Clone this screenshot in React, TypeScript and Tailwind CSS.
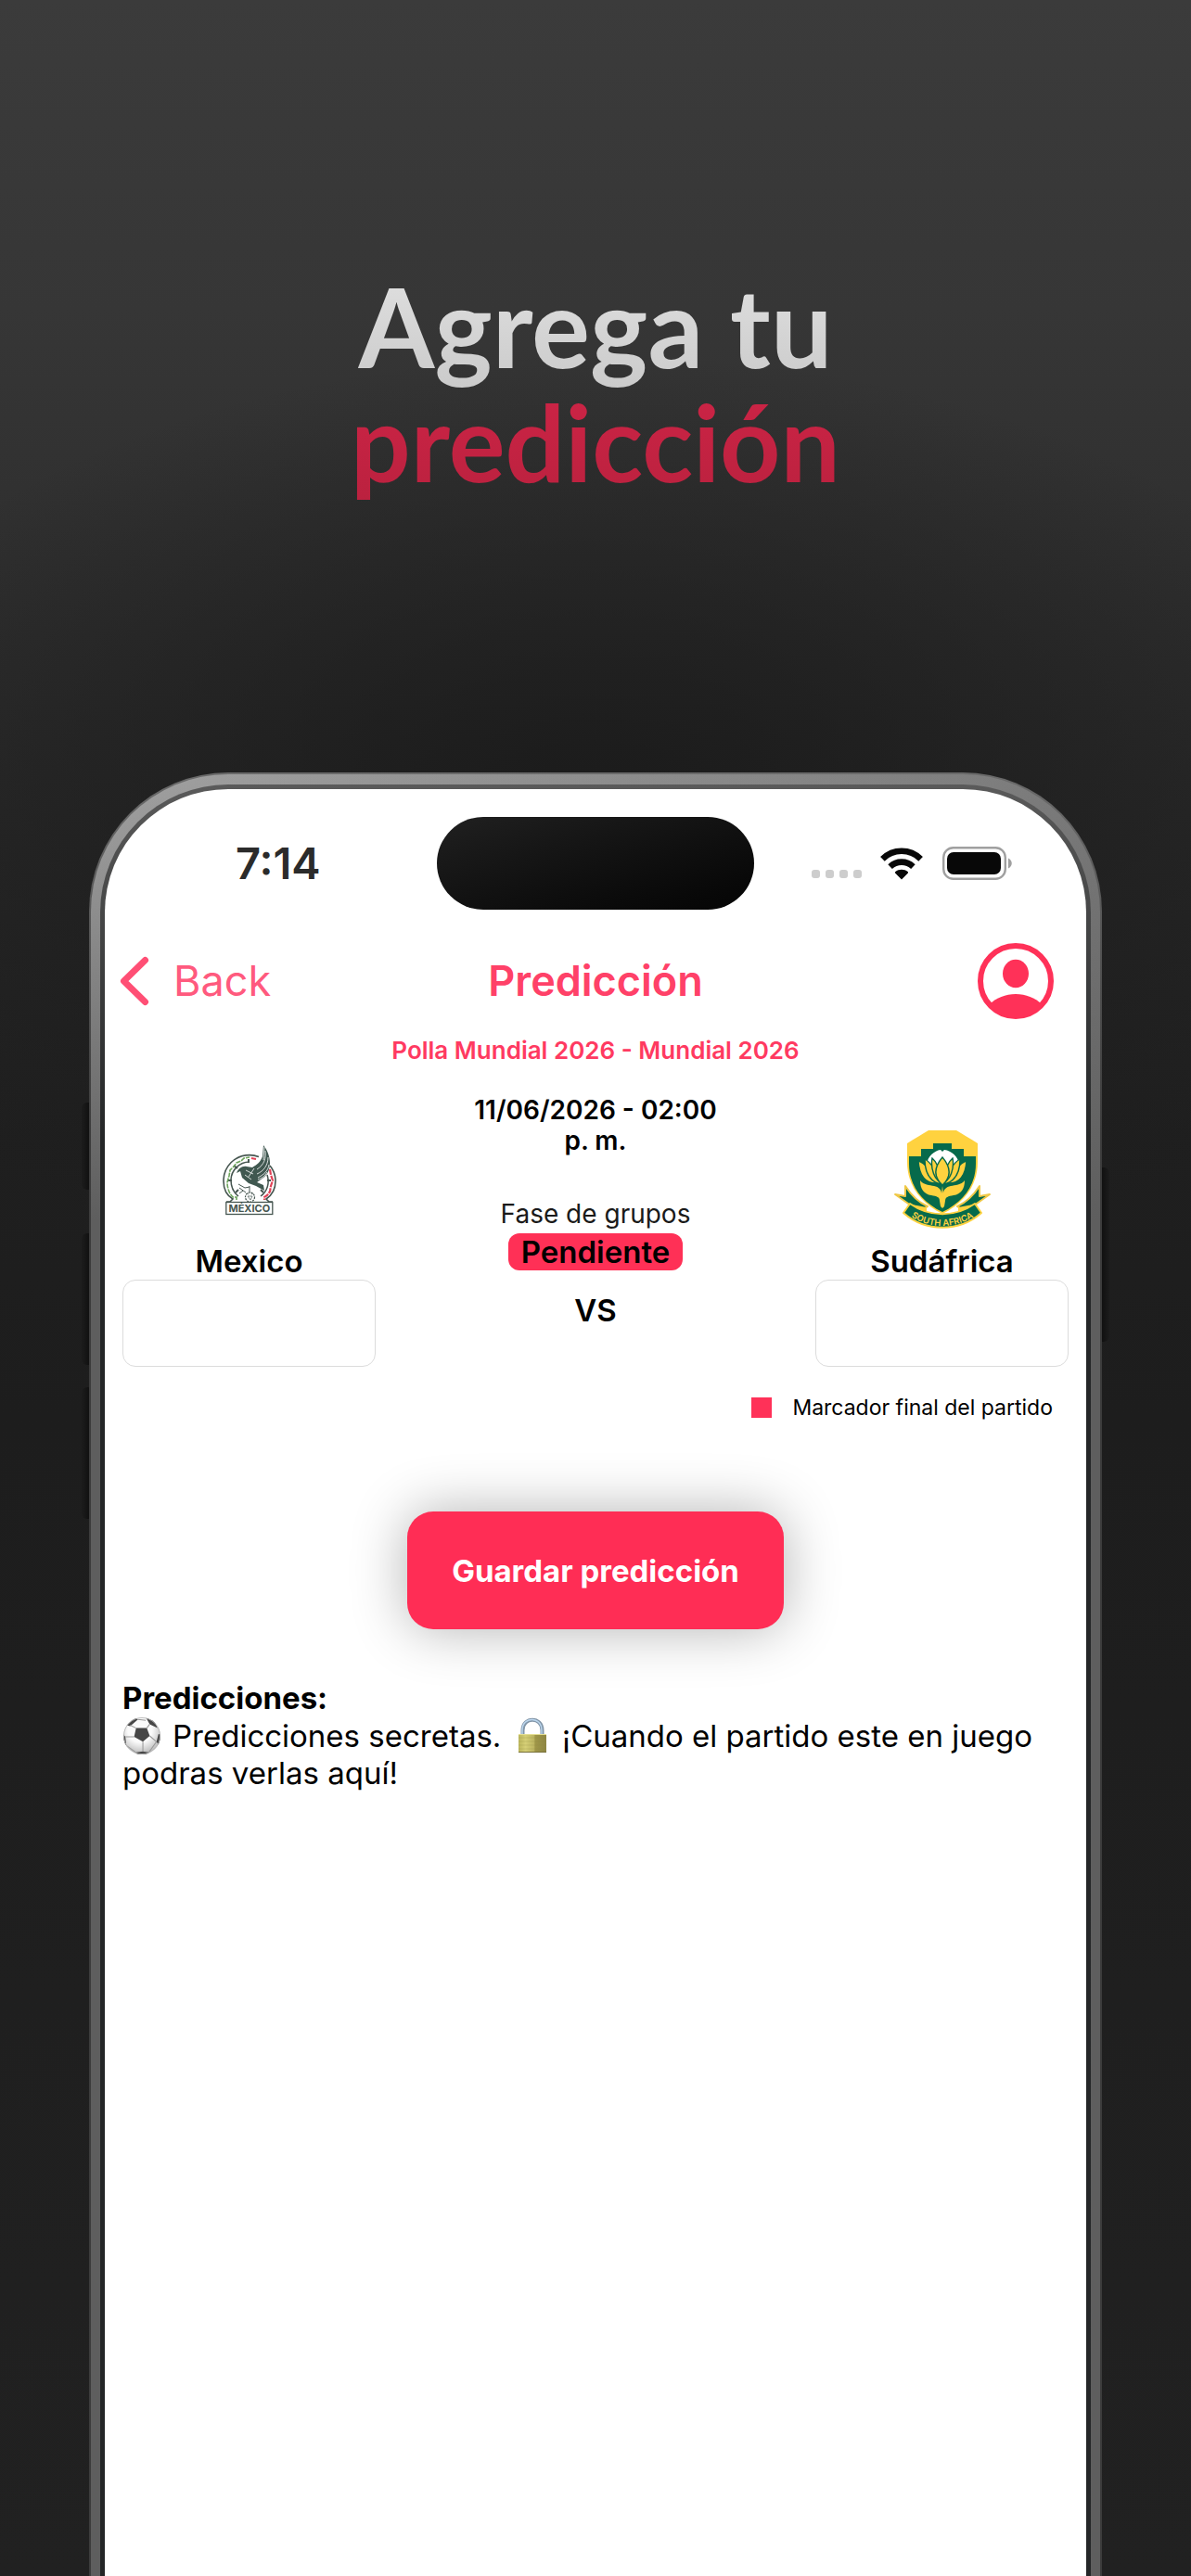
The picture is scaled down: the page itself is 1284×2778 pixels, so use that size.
import { useState } from "react";

function ChevronLeft() {
  return (
    <svg viewBox="0 0 32 54" className="h-[54px] w-8" fill="none" aria-hidden="true">
      <path
        d="M27.5 4.5 4.5 27l23 22.5"
        stroke="#ff4f75"
        strokeWidth="7"
        strokeLinecap="round"
        strokeLinejoin="round"
      />
    </svg>
  );
}

function ProfileIcon() {
  return (
    <svg viewBox="0 0 82 82" className="size-[82px]" aria-hidden="true">
      <clipPath id="profile-clip">
        <circle cx="41" cy="41" r="40" />
      </clipPath>
      <circle cx="41" cy="41" r="38" fill="none" stroke="#ff3158" strokeWidth="6" />
      <ellipse cx="41" cy="33" rx="14" ry="15.2" fill="#ff3158" />
      <path
        d="M13 66c7-7 17-11 28-11s21 4 28 11v16H13Z"
        fill="#ff3158"
        clipPath="url(#profile-clip)"
      />
    </svg>
  );
}

function WifiIcon() {
  return (
    <svg viewBox="0 0 46 35" className="h-[35px] w-[46px]" aria-hidden="true">
      <g fill="none" stroke="#080808" strokeWidth="6.6">
        <path d="M2.4 12.3C8 6.8 15 3.8 23 3.8s15 3 20.6 8.5" />
        <path d="M10.6 20.6C14 17.4 18.2 15.6 23 15.6s9 1.8 12.4 5" />
      </g>
      <path
        d="M23 34.4 16.3 27.7c-.5-.5-.4-1.2.1-1.6C18.2 24.6 20.5 23.8 23 23.8s4.8.8 6.6 2.3c.5.4.6 1.1.1 1.6Z"
        fill="#080808"
      />
    </svg>
  );
}

function BatteryIcon() {
  return (
    <svg viewBox="0 0 76 36" className="h-9 w-[76px]" aria-hidden="true">
      <rect x="1.2" y="1.2" width="66.6" height="33.6" rx="10.5" fill="none" stroke="#a0a0a0" strokeWidth="2.4" />
      <rect x="5" y="6" width="58" height="24" rx="7" fill="#080808" />
      <path d="M71 12.5c5 2.500 5 8.500 0 11Z" fill="#a0a0a0" />
    </svg>
  );
}

function MexicoCrest() {
  return (
    <svg viewBox="0 0 58 78" className="h-[78px] w-[58px]" role="img" aria-label="Escudo de México">
      <g fill="none" stroke="#465650">
        <path d="M4 63h4l3-3C4 56 1 49 1 40.500 1 25 13 12.600 29 12.600c4 0 7 .7 10 2M51 24c4 5 6 10 6 16.500 0 8.500-4 15.500-10 19.500l3 3h4" strokeWidth="1.6" />
        <path d="M17 57c-5-4-8-10-8-17 0-11 9-20 20-20M48 34c3 9 0 18-7 23" strokeWidth="1.5" />
        <path d="m6 40 4 0M12 24l4 3M14 53l3-3M28 17v4M52 40h-4M44 53l-3-3" strokeWidth="2" />
        <rect x="3.8" y="63.5" width="50" height="13" strokeWidth="1.3" />
      </g>
      <path d="M15 61v-3h-4c-4-4-6-10-6-16l2-7 1-6 4-4 3-4 5-2 3-3 6-1" fill="none" stroke="#6ca45b" strokeWidth="1.6" strokeDasharray="5 1" />
      <path d="m31 16 5 1M51 28l1 6 2 6-2 6-1 6-3 4-3 2v3" fill="none" stroke="#e14357" strokeWidth="2.2" strokeDasharray="6 1" />
      <path d="M15 32c2-5 6-8 11-7l6 1c5-3 9-6 11-12l1-12c4 5 7 12 7 19 0 8-3 13-7 16l-7 5 7 3 1 6-9-5-8-3-7-6-2-7Z" fill="#405850" />
      <g fill="none" stroke="#fff" strokeWidth="0.8">
        <path d="M46 8c1 8-1 15-9 20M49 15c0 9-5 15-12 18M50 23c-1 7-6 11-12 14M48 31c-3 5-6 7-10 8M45 4l-1 14" />
        <path d="m24 34 7 5M25 29l8 4M34 27l-6 9" />
      </g>
      <path d="m17 44 7 4 5-1M29 46v8M25 53l-7-5M22 51l-4 3" fill="none" stroke="#465650" strokeWidth="1" />
      <circle cx="29.5" cy="58" r="5" fill="#fff" stroke="#465650" strokeWidth="1.2" strokeDasharray="2 1" />
      <path d="m27 57 5 0-2 4ZM26 54l2 1M33 54l-2 1" stroke="#465650" strokeWidth="0.7" fill="none" />
      <text x="28.8" y="74" textAnchor="middle" fontFamily="Inter, sans-serif" fontSize="11" fontWeight="700" fill="#465650">
        MÉXICO
      </text>
    </svg>
  );
}

function SouthAfricaCrest() {
  return (
    <svg viewBox="0 0 106 108" className="h-[108px] w-[106px]" role="img" aria-label="Escudo de Sudáfrica">
      <g fill="#066a4b" stroke="#f0c846" strokeWidth="2" strokeLinejoin="round">
        <path d="M13 61c7 11 15 18 24 22l-12 8-9-4 3-5L2 70l11 2Z" />
        <path d="M93 61c-7 11-15 18-24 22l12 8 9-4-3-5 17-12-11 2Z" />
      </g>
      <path d="m20 81 16 3v9l-20-6ZM86 81l-16 3v9l20-6Z" fill="#ffd23f" />
      <path d="M15 15C23 10 31 5 38 1h30c7 4 15 9 23 14v20c0 25-14 44-38 56C29 79 15 60 15 35Z" fill="#ffd23f" />
      <path d="M17 29h13v-8h13v-6h20v6h13v8h13v8c0 23-13 41-36 52C30 78 17 60 17 37Z" fill="#066a4b" />
      <path d="M36 38c1-9 8-15 15-16l2 2 2-2c8 1 15 7 16 16Z" fill="#fff" />
      <g fill="#ffd23f" stroke="#066a4b" strokeWidth="1.4">
        <path d="M27 34c9 3 13 11 21 24-14 1-20-9-21-24ZM79 34c-9 3-13 11-21 24 14 1 20-9 21-24Z" />
        <path d="M34 32c9 5 12 15 17 27-12-3-17-12-17-27ZM72 32c-9 5-12 15-17 27 12-3 17-12 17-27Z" />
        <path d="M42 31c6 5 9 14 11 28-9-5-13-17-11-28ZM64 31c-6 5-9 14-11 28 9-5 13-17 11-28Z" />
        <path d="M53 30c-10 12-9 22 0 30 9-8 10-18 0-30Z" />
      </g>
      <path d="M29 55c4 5 10 5 15 6 5 1 8 4 8 8l1-8 1 8c0-4 3-7 8-8 5-1 11-1 15-6 0 9-4 15-12 16-6 1-9 2-9 6l-1 6-2 2-2-2-1-6c0-4-3-5-9-6-8-1-12-7-12-16Z" fill="#ffd23f" />
      <path d="M18 80c21 15 49 15 70 0l7 10c-24 21-60 21-84 0Z" fill="#066a4b" stroke="#ffd23f" strokeWidth="2" strokeLinejoin="round" />
      <path id="crest-ribbon" d="M16 92c22 16 52 16 74 0" fill="none" />
      <text fontFamily="Inter, sans-serif" fontSize="9.5" fontWeight="600" fill="#ffd23f">
        <textPath href="#crest-ribbon" startOffset="50%" textAnchor="middle">
          SOUTH AFRICA
        </textPath>
      </text>
    </svg>
  );
}

function SoccerBall() {
  return (
    <svg viewBox="0 0 40 40" className="mr-3 inline-block size-[42px] align-[-9px]" role="img" aria-label="Balón">
      <defs>
        <radialGradient id="ball-shade" cx="0.45" cy="0.35" r="0.65">
          <stop offset="0.5" stopColor="#fafafa" />
          <stop offset="1" stopColor="#b9b9b9" />
        </radialGradient>
        <clipPath id="ball-clip">
          <circle cx="20" cy="20" r="19" />
        </clipPath>
      </defs>
      <circle cx="20" cy="20" r="19" fill="url(#ball-shade)" />
      <g clipPath="url(#ball-clip)">
        <path
          d="M14 12h11l3 8-7 6-9-5ZM4 9l9-8 3 2-8 7ZM24 1l9 4 3 7-8-4ZM37 18l4 1-3 12-3-5ZM0 17l3 4 1 9-4-2ZM14 37l7-1 6 1-2 4H14Z"
          fill="#464646"
        />
        <path
          d="m14 12-6-3M16 3l8 1M25 12l3-4M28 20l7 6M21 26v10M12 21l-9 0M4 30l10 7M35 26l-8 11"
          fill="none"
          stroke="#999"
        />
      </g>
      <circle cx="20" cy="20" r="18.6" fill="none" stroke="#b5b5b5" strokeWidth="0.8" />
    </svg>
  );
}

function Padlock() {
  return (
    <svg viewBox="0 0 40 40" className="mr-3 ml-1 inline-block size-10 align-[-8px]" role="img" aria-label="Candado">
      <defs>
        <linearGradient id="lock-body">
          <stop offset="0" stopColor="#bcb65c" />
          <stop offset="0.25" stopColor="#d5cf76" />
          <stop offset="0.55" stopColor="#bdb561" />
          <stop offset="0.6" stopColor="#a09748" />
          <stop offset="1" stopColor="#8d8544" />
        </linearGradient>
      </defs>
      <path d="M9.500 20v-6c0-15 21-15 21 0v6" fill="none" stroke="#8296a8" strokeWidth="4" />
      <path d="M9 20v-6C9 -1.500 30 -1.500 30 14v6" fill="none" stroke="#b9d4ec" strokeWidth="1.5" />
      <rect x="5" y="18" width="30" height="20" rx="1" fill="url(#lock-body)" />
      <path d="M5 22h30M5 26h30M5 30h30M5 34h30" stroke="#8b8443" strokeWidth="0.5" opacity="0.5" />
      <path d="M5 18.500h30" stroke="#e5df92" />
      <path d="M5 37.500h30" stroke="#77703a" />
    </svg>
  );
}

function StatusBar() {
  return (
    <div className="grid grid-cols-[1fr_auto_1fr] items-center pt-[30px]">
      <span className="pl-[141px] text-[47px] leading-[54px] font-semibold text-[#2b2b2b]">7:14</span>
      <div className="h-[100px] w-[342px] rounded-full bg-linear-to-br from-[#202020] to-[#050505]" />
      <div className="flex items-center justify-end pr-[79px]">
        <div className="mt-[23px] mr-5 flex gap-[6px]">
          {[0, 1, 2, 3].map((dot) => (
            <span key={dot} className="size-[9px] rounded-[3px] bg-[#cdcdcd]" />
          ))}
        </div>
        <WifiIcon />
        <span className="ml-[21px]">
          <BatteryIcon />
        </span>
      </div>
    </div>
  );
}

interface TeamScoreProps {
  name: string;
  crest: React.ReactNode;
  value: string;
  onChange: (value: string) => void;
}

function TeamScore({ name, crest, value, onChange }: TeamScoreProps) {
  return (
    <label className="flex flex-col items-center pt-[37px]">
      <span className="flex h-[108px] items-center">{crest}</span>
      <span className="mt-[14px] text-[33px] leading-10 font-semibold">{name}</span>
      <input
        inputMode="numeric"
        value={value}
        onChange={(event) => onChange(event.target.value)}
        className="h-[94px] w-full rounded-[14px] border border-[#dcdcdc] bg-white text-center text-[33px] outline-none"
      />
    </label>
  );
}

export default function App() {
  const [home, setHome] = useState("");
  const [away, setAway] = useState("");

  return (
    <main className="flex min-h-screen flex-col overflow-hidden bg-[radial-gradient(ellipse_900px_520px_at_50%_900px,#1a1a1a_0%,#1a1a1a00_100%),linear-gradient(to_bottom,#3b3b3b_0%,#363636_12%,#1f1f1f_44%,#1d1d1d_55%,#212121_100%)] font-['Inter','Liberation_Sans',sans-serif]">
      <h1 className="pt-[290px] text-center font-['Lato','Open_Sans',sans-serif] leading-[124px] font-bold">
        <span className="-mb-4 block bg-linear-to-b from-[#e0e0e0] to-[#c9c9c9] bg-clip-text pb-4 text-[118px] text-transparent">
          Agrega tu
        </span>
        <span className="block bg-linear-to-b from-[#cd2446] to-[#b9213e] bg-clip-text pb-4 text-[114px] text-transparent">
          predicción
        </span>
      </h1>

      <div className="relative mx-24 mt-[279px] flex flex-1 flex-col">
        <div className="absolute top-[356px] -left-2 h-[94px] w-2 rounded-l-md bg-linear-to-r from-[#1c1c1c] to-[#111]" />
        <div className="absolute top-[497px] -left-2 h-[142px] w-2 rounded-l-md bg-linear-to-r from-[#1c1c1c] to-[#111]" />
        <div className="absolute top-[663px] -left-2 h-[142px] w-2 rounded-l-md bg-linear-to-r from-[#1c1c1c] to-[#111]" />
        <div className="absolute top-[426px] -right-2 h-[188px] w-2 rounded-r-md bg-linear-to-l from-[#1c1c1c] to-[#111]" />

        <div className="relative flex flex-1 flex-col rounded-t-[150px] bg-linear-to-b from-[#6a6a6a] to-[#3c3c3c] to-20% px-[2px] pt-[2px]">
          <div className="flex flex-1 flex-col rounded-t-[148px] bg-[linear-gradient(to_bottom,#5e5e5e00_0,#5e5e5e_480px),linear-gradient(to_right,#a2a2a2,#7a7a7a)] px-[10px] pt-[11px]">
            <div className="flex flex-1 flex-col rounded-t-[138px] bg-linear-to-b from-[#5a5a5a] to-[#242627] to-20% px-[5px] pt-[5px]">
              <div className="flex flex-1 flex-col rounded-t-[133px] bg-white px-[19px] text-black">
                <div className="-mx-[19px]">
                  <StatusBar />
                </div>

                <header className="mt-[35px] grid grid-cols-[1fr_auto_1fr] items-center">
                  <button type="button" className="-ml-[3px] flex items-center gap-[26px] text-[45px] leading-[54px] text-[#ff5a7e]">
                    <ChevronLeft />
                    Back
                  </button>
                  <h2 className="text-[45px] leading-[54px] font-semibold text-[#ff4168]">Predicción</h2>
                  <button type="button" aria-label="Perfil" className="mr-4 flex h-[84px] items-center justify-self-end">
                    <ProfileIcon />
                  </button>
                </header>

                <p className="mt-[15px] text-center text-[26px] leading-9 font-semibold text-[#ff3a61]">
                  Polla Mundial 2026 - Mundial 2026
                </p>

                <section className="mt-[30px] grid grid-cols-[273fr_474fr_273fr]">
                  <TeamScore name="Mexico" crest={<MexicoCrest />} value={home} onChange={setHome} />
                  <div className="flex flex-col items-center px-[90px] text-center">
                    <p className="text-[28px] leading-[33px] font-semibold">11/06/2026 - 02:00 p. m.</p>
                    <p className="mt-11 text-[28px] leading-9 text-[#1a1a1a]">Fase de grupos</p>
                    <span className="mt-[3px] rounded-[12px] bg-[#ff3056] px-[14px] text-[33px] leading-10 font-semibold">
                      Pendiente
                    </span>
                    <span className="mt-[23px] text-[33px] leading-10 font-semibold">VS</span>
                  </div>
                  <TeamScore name="Sudáfrica" crest={<SouthAfricaCrest />} value={away} onChange={setAway} />
                </section>

                <div className="mt-[30px] mr-[17px] flex items-center justify-end gap-[22px]">
                  <span className="size-[22px] bg-[#ff3158]" />
                  <span className="text-[23px] leading-7">Marcador final del partido</span>
                </div>

                <button
                  type="button"
                  className="mt-[98px] h-[127px] self-center rounded-[28px] bg-[#ff2d55] px-12 text-[33px] leading-10 font-bold text-white shadow-[0_0_60px_rgba(0,0,0,0.3)]"
                >
                  Guardar predicción
                </button>

                <section className="mt-[55px] text-[33px] leading-[39px]">
                  <h3 className="font-bold">Predicciones:</h3>
                  <p>
                    <SoccerBall />
                    Predicciones secretas. <Padlock />
                    ¡Cuando el partido este en juego podras verlas aquí!
                  </p>
                </section>
              </div>
            </div>
          </div>
        </div>
      </div>
    </main>
  );
}
